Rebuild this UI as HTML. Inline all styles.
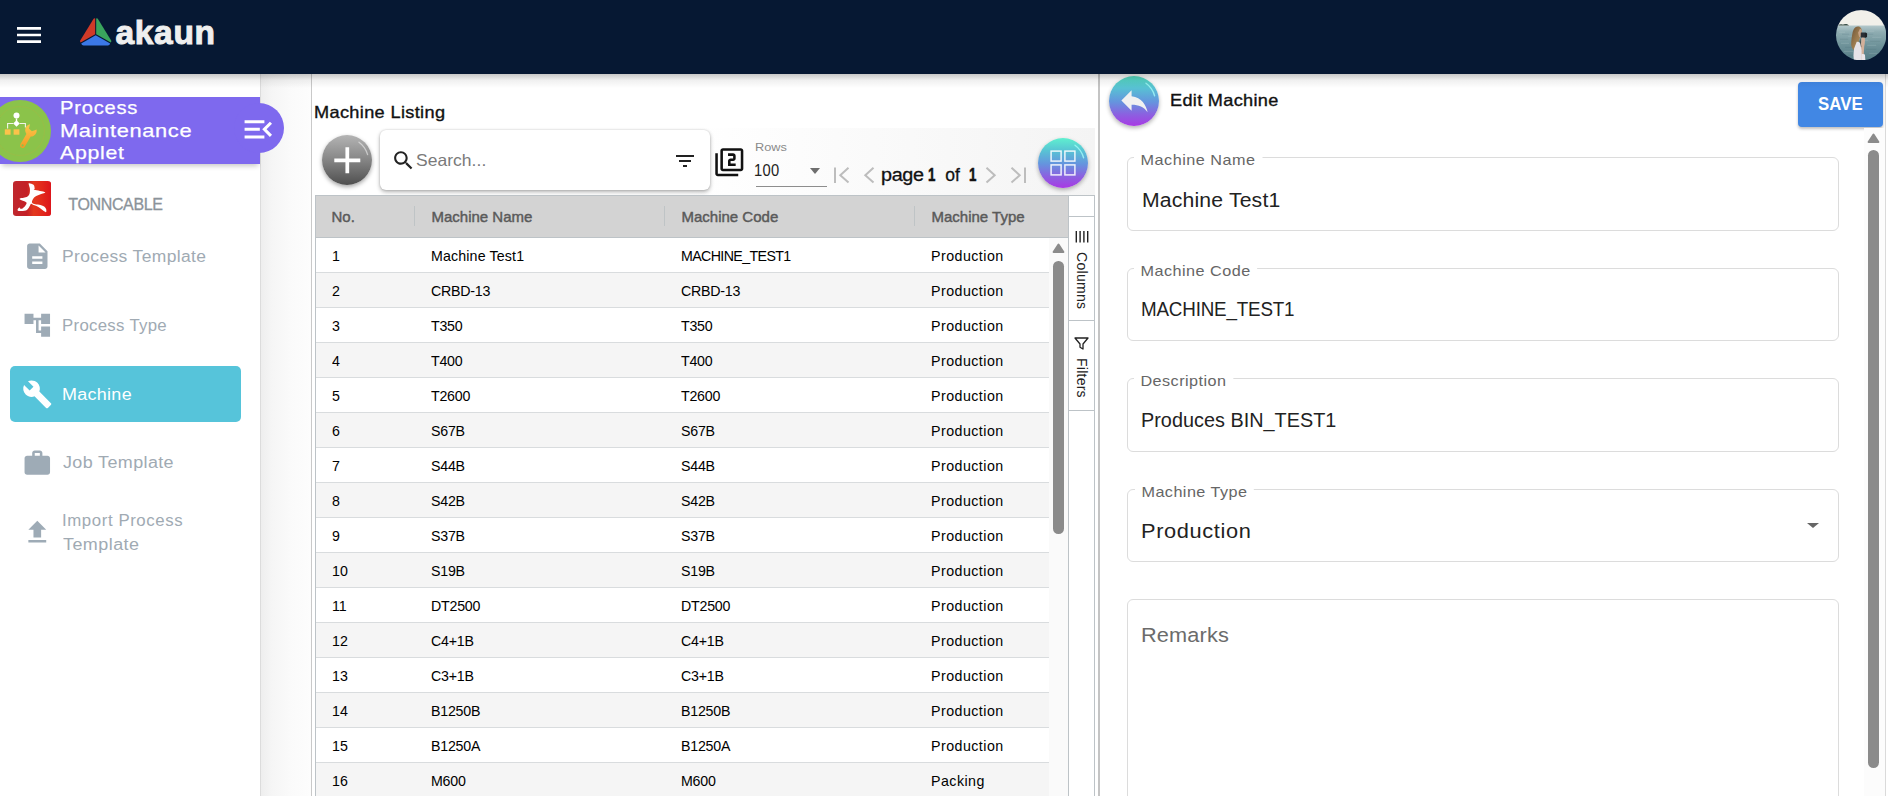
<!DOCTYPE html>
<html lang="en">
<head>
<meta charset="utf-8">
<title>Process Maintenance Applet - Machine</title>
<style>
*{box-sizing:border-box;margin:0;padding:0}
html,body{width:1888px;height:796px;overflow:hidden;background:#fff}
body{font-family:"Liberation Sans",sans-serif;color:#222;position:relative}
.abs{position:absolute}
.t{position:absolute;white-space:nowrap;line-height:1}
/* header */
#hdr{position:absolute;left:0;top:0;width:1888px;height:74px;background:#061833;z-index:20}
#hdr-shadow{position:absolute;left:0;top:74px;width:1888px;height:14px;background:linear-gradient(to bottom,rgba(0,0,0,.22),rgba(0,0,0,.06) 45%,rgba(0,0,0,0));z-index:19}
/* sidebar */
#side{position:absolute;left:0;top:74px;width:261px;height:722px;background:#fff;border-right:1px solid #dcdcdc}
#gap{position:absolute;left:261px;top:74px;width:51px;height:722px;background:linear-gradient(to right,#eeeeee 0,#f5f5f5 10px,#fafafa 28px,#fdfdfd 100%)}
#gapline{position:absolute;left:311px;top:74px;width:1px;height:722px;background:#c9c9c9}
.nav{position:absolute;left:10px;width:231px;height:56px;border-radius:5px}
.nav .lbl{position:absolute;white-space:nowrap;font-size:16px;color:#a0aab3;line-height:20px;transform:scaleX(1.05);transform-origin:0 50%}
.nav svg{position:absolute;left:12px;top:13px;width:30.6px;height:30.6px;fill:#9eabb6}
.nav.on{background:#56c4da}
.nav.on .lbl{color:#fff}
.nav.on svg{fill:#fff}

/* list panel */
#list{position:absolute;left:312px;top:74px;width:787px;height:722px;background:#fff}
#tb{position:absolute;left:3px;top:54px;width:780px;height:68px;background:linear-gradient(to right,#fff 0,#fff 48%,#f4f4f4 100%)}
#grid{position:absolute;left:3px;top:121px;width:754px;height:601px;border-left:1px solid #bdc3c7;border-top:1px solid #bdc3c7;font-size:14.200px;color:#000}
#gh{position:absolute;left:0;top:0;width:753px;height:42px;background:#d3d3d3;border-bottom:1px solid #bdc3c7}
#gh span{position:absolute;top:13px;font-size:15px;font-weight:400;color:#5a5a5a;-webkit-text-stroke:.45px #5a5a5a;line-height:16px;white-space:nowrap}
#gh i{position:absolute;top:10px;width:1px;height:20px;background:#bfc4c6}
.r{position:absolute;left:0;width:732.8px;height:35px;border-bottom:1px solid #d9dcde;background:#fff}
.r.o{background:#f5f5f5}
.r span{position:absolute;top:9.500px;line-height:16px;white-space:nowrap;font-size:15px;transform:scaleX(.947);transform-origin:0 50%}
.r .c0{left:15.5px}.r .c1{left:114.8px;letter-spacing:-.25px}.r .c2{left:364.8px;letter-spacing:-.25px}.r .c3{left:614.5px;letter-spacing:.5px}

/* edit panel */
#edit{position:absolute;left:1100px;top:74px;width:788px;height:722px;background:#fff}
.fld{position:absolute;left:27px;width:712px;height:73.500px;border:1px solid #dcdcdc;border-radius:6px}
.fld .lb{position:absolute;padding:0 6px;background:#fff;font-size:15px;line-height:16px;color:#666;white-space:nowrap;transform:scaleX(1.04);transform-origin:0 50%}
.fld .vl{position:absolute;font-size:20px;line-height:22px;color:#222;white-space:nowrap;transform:scaleX(1.03);transform-origin:0 50%}
.apt{font-size:19px;color:#fff;z-index:5;-webkit-text-stroke:.25px #fff;transform:scaleX(1.06);transform-origin:0 50%}
</style>
</head>
<body>

<!-- ===== top header ===== -->
<div id="hdr">
  <svg class="abs" style="left:12.5px;top:19px;width:32px;height:32px" viewBox="0 0 24 24"><path fill="#fff" d="M3 18h18v-2H3v2zm0-5h18v-2H3v2zm0-7v2h18V6H3z"/></svg>
  <svg class="abs" style="left:79px;top:17px;width:34px;height:30px" viewBox="0 0 34 30">
    <path d="M16.2 1.6 L16.2 17.2 L1.6 25.6 Q0.6 24.6 1.4 23.2 L14.6 1.8 Q15.4 0.8 16.2 1.6Z" fill="#d03a28"/>
    <path d="M17.2 1.6 L17.2 17.2 L31.8 25.6 Q32.8 24.6 32 23.2 L18.8 1.8 Q18 0.8 17.2 1.6Z" fill="#3aa55d"/>
    <path d="M16.7 18.2 L2.2 26.6 Q2.8 28.4 4.6 28.6 L28.8 28.6 Q30.6 28.4 31.2 26.6Z" fill="#3b78e7"/>
  </svg>
  <div class="t" id="brand" style="left:115.5px;top:15.7px;font-size:33.5px;font-weight:700;color:#efefef;letter-spacing:0.68px;-webkit-text-stroke:1px #efefef">akaun</div>
  <svg class="abs" id="avatar" style="left:1835.800px;top:9.600px;width:50.300px;height:50.500px" viewBox="0 0 50 50">
    <defs>
      <clipPath id="avc"><circle cx="25" cy="25" r="25"/></clipPath>
      <linearGradient id="sea" x1="0" y1="0" x2="0" y2="1"><stop offset="0" stop-color="#b4c9cc"/><stop offset=".18" stop-color="#8fadb2"/><stop offset=".55" stop-color="#6f939a"/><stop offset="1" stop-color="#557c86"/></linearGradient>
      <linearGradient id="hair" x1="0" y1="0" x2="1" y2="1"><stop offset="0" stop-color="#6b5236"/><stop offset=".5" stop-color="#9a7a4e"/><stop offset="1" stop-color="#b99a6a"/></linearGradient>
    </defs>
    <g clip-path="url(#avc)">
      <rect x="0" y="0" width="50" height="16" fill="#f1f0ea"/>
      <rect x="0" y="15.300" width="50" height="35" fill="url(#sea)"/>
      <path d="M2 15.400c1.200-1.200 2.800-1.600 4-1.200 1.200.3 1.800.2 3-.3 1.500-.500 3 .2 4 1.500z" fill="#3d524c"/>
      <g stroke="#dfe9ea" stroke-opacity=".35" stroke-width=".5" fill="none"><path d="M3 22h6M12 26h7M30 21h8M36 27h9M5 33h8M31 35h9M8 41h9M33 43h8M27 30h5"/></g>
      <g stroke="#3f636d" stroke-opacity=".35" stroke-width=".5" fill="none"><path d="M6 24h7M28 24h9M4 29h8M34 31h10M9 37h8M30 39h10M12 45h8"/></g>
      <path d="M21.500 16.300c-2.600.3-4.300 2.500-4.900 5.500-.8 4-1.600 8.500-1.500 12.500.1 2.500 1.200 4.500 2.600 5.500l3.500-4 2.500-8 1.800-6.500c.4-2.500-.9-5.300-4-5z" fill="url(#hair)"/>
      <path d="M23.800 18.500c1.400.3 2 1.600 1.900 3.200l-.3 3.800-2.400 1.500-1-4.500z" fill="#c7a387"/>
      <path d="M25 22.200h4.300c.6 0 1 .4 1 1v3.300c0 .6-.4 1-1 1H25.600c-.6 0-1-.4-1-1v-3.300c0-.6.100-1 .4-1z" fill="#2a3036"/>
      <rect x="28.600" y="22.800" width="2.300" height="4.200" rx=".8" fill="#1f2429"/>
      <path d="M25.400 27.300l3.200.2c.4 3 .1 6-.6 9l-.7 13.500h-3.600l1-14z" fill="#d3b09a"/>
      <path d="M24.200 27.600l.9 8.400-.4 2.500-1.200-7z" fill="#39423f"/>
      <path d="M20.600 31.500c1.600-.5 3 .3 3.600 2l1.200 6.500.2 10h-7.800c-.6-4-.5-8 .3-12z" fill="#e6e3e8"/>
      <path d="M25.400 44c1.500-.5 3-.3 3.400.5l.4 5.500h-3.600z" fill="#ebe6ea"/>
    </g>
  </svg>
</div>
<div id="hdr-shadow"></div>

<!-- ===== sidebar ===== -->
<div id="side">
  <!-- applet title band -->
  <div class="abs" style="left:0;top:23px;width:260px;height:67px;background:#7e69ee;box-shadow:0 4px 5px -2px rgba(0,0,0,.22)"></div>
  <div class="abs" style="left:234px;top:29px;width:50px;height:50px;border-radius:50%;background:#7e69ee;z-index:3"></div>
  <svg class="abs" style="left:240px;top:37px;width:36.6px;height:36.6px;z-index:4" viewBox="0 0 24 24"><path fill="#fff" d="M3 18h13v-2H3v2zm0-5h10v-2H3v2zm0-7v2h13V6H3zm18 9.59L17.42 12 21 8.41 19.590 7l-5 5 5 5L21 15.590z"/></svg>
  <div class="abs" style="left:-11px;top:25.5px;width:62px;height:62px;border-radius:50%;background:#8bc34a"></div>
  <div class="abs" style="left:-5px;top:31.500px;width:50px;height:50px;border-radius:50%;border:1px solid rgba(160,185,70,.6)"></div>
  <svg class="abs" style="left:2px;top:35.200px;width:38px;height:42px" viewBox="0 0 38 42"><defs><linearGradient id="wg" x1="0" y1="0" x2="0" y2="1"><stop offset="0" stop-color="#f9c74a"/><stop offset="1" stop-color="#f59a23"/></linearGradient></defs>
    <circle cx="14.5" cy="6.500" r="3" fill="#fff"/>
    <path d="M14.500 9.500v3" stroke="#fff" stroke-width="1.4"/>
    <path d="M14.500 11.200l3.300 3.300-3.300 3.300-3.300-3.300z" fill="#fff"/>
    <path d="M11.200 14.500H5.600v5M17.800 14.500h5.600v4" stroke="#f1f5e6" stroke-width="1.100" fill="none"/>
    <rect x="2.800" y="20.300" width="5.800" height="5.400" fill="#fbc34a"/>
    <rect x="11.600" y="20.300" width="5.800" height="5.400" fill="#fbc34a"/>
    <path d="M34.600 20.400c.5 2.600-.7 5.300-3.200 6.500-.9.400-1.800.6-2.700.5l-6 10.300c-.7 1.200-2.200 1.600-3.400.9s-1.600-2.200-.9-3.400l6-10.300c-1.600-2.100-1.700-5.100-.100-7.300 1-1.300 2.400-2.100 3.800-2.300l-1.200 4.300 3 2.700 3.500-1.400z" fill="url(#wg)"/>
    <circle cx="20.600" cy="36.400" r="1.100" fill="#8bc34a"/>
  </svg>
  <div class="t apt" id="a1" style="left:59.9px;top:23.9px;letter-spacing:0.73px">Process</div>
  <div class="t apt" id="a2" style="left:59.9px;top:46.7px;letter-spacing:0.56px;transform:scaleX(1.15);transform-origin:0 50%">Maintenance</div>
  <div class="t apt" id="a3" style="left:60.1px;top:69.3px;letter-spacing:0.64px;transform:scaleX(1.12);transform-origin:0 50%">Applet</div>

  <!-- tenant -->
  <svg class="abs" style="left:12.900px;top:106.900px;width:38.200px;height:35px" viewBox="0 0 38.200 35">
    <defs><linearGradient id="tg" x1="0" x2="1" y1="0" y2="0"><stop offset="0" stop-color="#bf282e"/><stop offset=".36" stop-color="#c41f26"/><stop offset=".54" stop-color="#e2391e"/><stop offset=".75" stop-color="#e22a1c"/><stop offset="1" stop-color="#dc151b"/></linearGradient></defs>
    <rect x="0" y="0" width="38.200" height="35" rx="3.200" fill="url(#tg)"/>
    <path d="M15.90 2.30C16.62 2.12 19.53 2.93 20.50 3.80C21.47 4.67 21.55 6.68 21.70 7.50C21.85 8.32 19.67 8.08 21.40 8.70C23.13 9.32 31.08 10.43 32.10 11.20C33.12 11.97 29.05 12.62 27.50 13.30C25.95 13.98 24.07 14.48 22.80 15.30C21.53 16.12 20.52 17.13 19.90 18.20C19.28 19.27 18.70 20.85 19.10 21.70C19.50 22.55 20.90 22.93 22.30 23.30C23.70 23.67 26.02 23.55 27.50 23.90C28.98 24.25 30.27 24.72 31.20 25.40C32.13 26.08 32.77 27.07 33.10 28.00C33.43 28.93 33.52 30.62 33.20 31.00C32.88 31.38 32.15 30.88 31.20 30.30C30.25 29.72 28.70 28.33 27.50 27.50C26.30 26.67 25.17 25.87 24.00 25.30C22.83 24.73 21.47 24.52 20.50 24.10C19.53 23.68 18.82 22.63 18.20 22.80C17.58 22.97 17.38 24.18 16.80 25.10C16.22 26.02 15.53 27.52 14.70 28.30C13.87 29.08 13.33 29.53 11.80 29.80C10.27 30.07 6.70 30.10 5.50 29.90C4.30 29.70 4.45 29.15 4.60 28.60C4.75 28.05 5.92 26.75 6.40 26.60C6.88 26.45 6.98 27.55 7.50 27.70C8.02 27.85 8.73 27.93 9.50 27.50C10.27 27.07 11.42 25.97 12.10 25.10C12.78 24.23 13.55 23.02 13.60 22.30C13.65 21.58 13.42 21.38 12.40 20.80C11.38 20.22 8.42 19.35 7.50 18.80C6.58 18.25 6.37 17.83 6.90 17.50C7.43 17.17 9.43 17.12 10.70 16.80C11.97 16.48 13.52 16.33 14.50 15.60C15.48 14.87 16.20 13.70 16.60 12.40C17.00 11.10 16.97 9.05 16.90 7.80C16.83 6.55 16.37 5.82 16.20 4.90C16.03 3.98 15.18 2.48 15.90 2.30Z" fill="#fff"/>
  </svg>
  <div class="t" id="tenant" style="left:68.3px;top:123.2px;font-size:16px;color:#8b939a;letter-spacing:-0.36px;-webkit-text-stroke:.3px #8b939a">TONNCABLE</div>

  <!-- nav items -->
  <div class="nav" style="top:154px"><svg viewBox="0 0 24 24"><path d="M14 2H6c-1.100 0-1.990.9-1.990 2L4 20c0 1.100.89 2 1.990 2H18c1.100 0 2-.9 2-2V8l-6-6zm2 16H8v-2h8v2zm0-4H8v-2h8v2zm-3-5V3.500L18.500 9H13z"/></svg><span class="lbl" id="n1" style="left:52.0px;top:18.5px;letter-spacing:0.35px;transform:scaleX(1.09);transform-origin:0 50%">Process Template</span></div>
  <div class="nav" style="top:223px"><svg viewBox="0 0 24 24"><path d="M22 11V3h-7v3H9V3H2v8h7V8h2v10h4v3h7v-8h-7v3h-2V8h2v3z"/></svg><span class="lbl" id="n2" style="left:52.0px;top:19.4px;letter-spacing:0.28px">Process Type</span></div>
  <div class="nav on" style="top:292px"><svg viewBox="0 0 24 24"><path d="M22.700 19l-9.100-9.100c.9-2.300.4-5-1.500-6.900-2-2-5-2.400-7.400-1.300L9 6 6 9 1.600 4.700C.4 7.100.9 10.100 2.900 12.100c1.900 1.900 4.600 2.400 6.900 1.500l9.100 9.100c.4.4 1 .4 1.400 0l2.300-2.300c.5-.4.500-1.100.1-1.400z"/></svg><span class="lbl" id="n3" style="left:52.0px;top:19.4px;letter-spacing:0.28px;transform:scaleX(1.12);transform-origin:0 50%">Machine</span></div>
  <div class="nav" style="top:361px"><svg viewBox="0 0 24 24"><path d="M20 6h-4V4c0-1.110-.89-2-2-2h-4c-1.110 0-2 .89-2 2v2H4c-1.110 0-1.990.89-1.990 2L2 19c0 1.110.89 2 2 2h16c1.110 0 2-.89 2-2V8c0-1.110-.89-2-2-2zm-6 0h-4V4h4v2z"/></svg><span class="lbl" id="n4" style="left:52.9px;top:17.9px;letter-spacing:0.35px;transform:scaleX(1.12);transform-origin:0 50%">Job Template</span></div>
  <div class="nav" style="top:430px"><svg viewBox="0 0 24 24"><path d="M5 20h14v-2H5v2zm0-10h4v6h6v-6h4l-7-7-7 7z"/></svg><span class="lbl" id="n5a" style="left:52.0px;top:6.5px;letter-spacing:0.56px">Import Process</span><span class="lbl" id="n5b" style="left:52.9px;top:31.2px;letter-spacing:0.42px;transform:scaleX(1.12);transform-origin:0 50%">Template</span></div>
</div>
<div id="gap"></div>
<div id="gapline"></div>


<!-- ===== machine listing ===== -->
<div id="list">
  <div class="t" id="ml" style="left:1.8px;top:29.9px;font-size:16.500px;color:#111;letter-spacing:0.32px;transform:scaleX(1.1);transform-origin:0 50%;-webkit-text-stroke:.35px #111">Machine Listing</div>
  <div id="tb"></div>
  <div class="abs" id="addbtn" style="left:10px;top:61px;width:50px;height:50px;border-radius:50%;background:linear-gradient(to bottom,#b4b4b4,#8a8a8a 45%,#4f4f4f);box-shadow:0 2px 4px rgba(0,0,0,.35)">
    <svg class="abs" style="left:2.700px;top:2.700px;width:44.600px;height:44.600px" viewBox="0 0 24 24"><path fill="#fff" d="M19 13h-6v6h-2v-6H5v-2h6V5h2v6h6v2z"/></svg>
    <svg class="abs" style="left:0;top:0;width:50px;height:50px" viewBox="0 0 50 50"><path d="M37 7.2a22.5 22.5 0 0 1 8.6 12.5" fill="none" stroke="rgba(255,255,255,.5)" stroke-width="1.3" stroke-linecap="round"/></svg>
  </div>
  <div class="abs" id="search" style="left:68px;top:56px;width:330px;height:60px;background:#fff;border-radius:6px;box-shadow:0 2px 4px rgba(0,0,0,.3),0 0 2px rgba(0,0,0,.18)">
    <svg class="abs" style="left:10.500px;top:17.500px;width:25px;height:25px" viewBox="0 0 24 24"><path fill="#222" d="M15.500 14h-.79l-.28-.27C15.410 12.590 16 11.110 16 9.500 16 5.910 13.090 3 9.500 3S3 5.910 3 9.500 5.910 16 9.500 16c1.610 0 3.090-.59 4.230-1.570l.27.28v.79l5 4.990L20.490 19l-4.990-5zm-6 0C7.010 14 5 11.990 5 9.500S7.010 5 9.500 5 14 7.010 14 9.500 11.990 14 9.500 14z"/></svg>
    <div class="t" id="sph" style="left:36.4px;top:21.9px;font-size:16.500px;color:#7a7a7a;letter-spacing:0.03px;transform:scaleX(1.06);transform-origin:0 50%">Search...</div>
    <svg class="abs" style="left:292.500px;top:19px;width:24px;height:24px" viewBox="0 0 24 24"><path fill="#222" d="M10 18h4v-2h-4v2zM3 6v2h18V6H3zm3 7h12v-2H6v2z"/></svg>
  </div>
  <svg class="abs" style="left:402.300px;top:72.600px;width:30.600px;height:30.600px" viewBox="0 0 24 24"><path fill="#111" d="M3 5H1v16c0 1.100.9 2 2 2h16v-2H3V5zm18-4H7c-1.100 0-2 .9-2 2v14c0 1.100.9 2 2 2h14c1.100 0 2-.9 2-2V3c0-1.100-.9-2-2-2zm0 16H7V3h14v14zm-4-4h-4v-2h2c1.100 0 2-.89 2-2V7c0-1.110-.9-2-2-2h-4v2h4v2h-2c-1.100 0-2 .89-2 2v4h6v-2z"/></svg>
  <div class="t" id="rowsl" style="left:442.8px;top:67.9px;font-size:11.800px;color:#8a8a8a;letter-spacing:0.02px;transform:scaleX(1.08);transform-origin:0 50%">Rows</div>
  <div class="t" id="rowsv" style="left:442.2px;top:88.8px;font-size:16px;color:#222;letter-spacing:0.32px;transform:scaleX(0.92);transform-origin:0 50%">100</div>
  <div class="abs" style="left:498.2px;top:94.1px;width:0;height:0;border-left:5.9px solid transparent;border-right:5.9px solid transparent;border-top:6px solid #6e6e6e"></div>
  <div class="abs" style="left:443.500px;top:112px;width:71px;height:1px;background:#8d8d8d"></div>
  <!-- pager -->
  <svg class="abs" style="left:519px;top:90px;width:22px;height:22px" viewBox="0 0 22 22"><path d="M4 3.500v15.500M17.500 3.800l-8.200 7.400 8.200 7.400" fill="none" stroke="#bdbdbd" stroke-width="2"/></svg>
  <svg class="abs" style="left:549px;top:90px;width:16px;height:22px" viewBox="0 0 16 22"><path d="M12.500 3.800l-8.200 7.400 8.200 7.400" fill="none" stroke="#bdbdbd" stroke-width="2"/></svg>
  <div class="t" id="pg1" style="left:569.4px;top:92.9px;font-size:17.500px;color:#111;letter-spacing:-0.33px;transform:scaleX(1.13);transform-origin:0 50%;-webkit-text-stroke:.3px #111">page</div>
  <div class="t" id="pg2" style="left:616.1px;top:91.8px;font-size:18.500px;color:#111;font-weight:700;transform:scaleX(.72);transform-origin:0 50%;-webkit-text-stroke:.5px #111">1</div>
  <div class="t" id="pg3" style="left:633.2px;top:92.9px;font-size:17.500px;color:#111;letter-spacing:0.06px;-webkit-text-stroke:.3px #111">of</div>
  <div class="t" id="pg4" style="left:656.5px;top:91.8px;font-size:18.500px;color:#111;font-weight:700;transform:scaleX(.72);transform-origin:0 50%;-webkit-text-stroke:.5px #111">1</div>
  <svg class="abs" style="left:671px;top:90px;width:16px;height:22px" viewBox="0 0 16 22"><path d="M3.500 3.800l8.200 7.400-8.200 7.400" fill="none" stroke="#bdbdbd" stroke-width="2"/></svg>
  <svg class="abs" style="left:695px;top:90px;width:22px;height:22px" viewBox="0 0 22 22"><path d="M18 3.500v15.500M4.500 3.800l8.200 7.400-8.200 7.400" fill="none" stroke="#bdbdbd" stroke-width="2"/></svg>
  <div class="abs" id="viewbtn" style="left:726px;top:64px;width:50px;height:50px;border-radius:50%;background:linear-gradient(to bottom,#5ff0cf 0,#58c4d4 25%,#6594de 52%,#8a62e0 76%,#a83ae4 100%);box-shadow:0 2px 4px rgba(0,0,0,.3)">
    <svg class="abs" style="left:0;top:0;width:50px;height:50px" viewBox="0 0 50 50"><g fill="none" stroke="rgba(255,255,255,.88)" stroke-width="1.5"><rect x="13.1" y="13.1" width="10" height="10"/><rect x="26.9" y="13.1" width="10" height="10"/><rect x="13.1" y="26.9" width="10" height="10"/><rect x="26.9" y="26.9" width="10" height="10"/></g></svg>
    <svg class="abs" style="left:0;top:0;width:50px;height:50px" viewBox="0 0 50 50"><path d="M37 7.2a22.5 22.5 0 0 1 8.6 12.5" fill="none" stroke="rgba(170,255,250,.75)" stroke-width="1.4" stroke-linecap="round"/></svg>
  </div>

  <div id="grid">
    <div id="gh"><span style="left:15.500px">No.</span><i style="left:98px"></i><span style="left:115.500px">Machine Name</span><i style="left:348.2px"></i><span style="left:365.500px">Machine Code</span><i style="left:598.2px"></i><span style="left:615.500px">Machine Type</span></div>
    <div class="r" style="top:42px"><span class="c0">1</span><span class="c1" style="letter-spacing:.15px">Machine Test1</span><span class="c2" style="letter-spacing:-.65px">MACHINE_TEST1</span><span class="c3">Production</span></div>
    <div class="r o" style="top:77px"><span class="c0">2</span><span class="c1">CRBD-13</span><span class="c2">CRBD-13</span><span class="c3">Production</span></div>
    <div class="r" style="top:112px"><span class="c0">3</span><span class="c1">T350</span><span class="c2">T350</span><span class="c3">Production</span></div>
    <div class="r o" style="top:147px"><span class="c0">4</span><span class="c1">T400</span><span class="c2">T400</span><span class="c3">Production</span></div>
    <div class="r" style="top:182px"><span class="c0">5</span><span class="c1">T2600</span><span class="c2">T2600</span><span class="c3">Production</span></div>
    <div class="r o" style="top:217px"><span class="c0">6</span><span class="c1">S67B</span><span class="c2">S67B</span><span class="c3">Production</span></div>
    <div class="r" style="top:252px"><span class="c0">7</span><span class="c1">S44B</span><span class="c2">S44B</span><span class="c3">Production</span></div>
    <div class="r o" style="top:287px"><span class="c0">8</span><span class="c1">S42B</span><span class="c2">S42B</span><span class="c3">Production</span></div>
    <div class="r" style="top:322px"><span class="c0">9</span><span class="c1">S37B</span><span class="c2">S37B</span><span class="c3">Production</span></div>
    <div class="r o" style="top:357px"><span class="c0">10</span><span class="c1">S19B</span><span class="c2">S19B</span><span class="c3">Production</span></div>
    <div class="r" style="top:392px"><span class="c0">11</span><span class="c1">DT2500</span><span class="c2">DT2500</span><span class="c3">Production</span></div>
    <div class="r o" style="top:427px"><span class="c0">12</span><span class="c1">C4+1B</span><span class="c2">C4+1B</span><span class="c3">Production</span></div>
    <div class="r" style="top:462px"><span class="c0">13</span><span class="c1">C3+1B</span><span class="c2">C3+1B</span><span class="c3">Production</span></div>
    <div class="r o" style="top:497px"><span class="c0">14</span><span class="c1">B1250B</span><span class="c2">B1250B</span><span class="c3">Production</span></div>
    <div class="r" style="top:532px"><span class="c0">15</span><span class="c1">B1250A</span><span class="c2">B1250A</span><span class="c3">Production</span></div>
    <div class="r o" style="top:567px"><span class="c0">16</span><span class="c1">M600</span><span class="c2">M600</span><span class="c3">Packing</span></div>
    <!-- grid vertical scrollbar -->
    <div class="abs" style="left:732.8px;top:42px;width:20.2px;height:560px;background:#fafafa"></div>
    <svg class="abs" style="left:734.6px;top:46.3px;width:15px;height:13px" viewBox="0 0 15 13"><path d="M7.5 2.6l4.9 7.4H2.600z" fill="#8b8b8b" stroke="#8b8b8b" stroke-width="2" stroke-linejoin="round"/></svg>
    <div class="abs" style="left:737.2px;top:65px;width:10.6px;height:273px;border-radius:5.3px;background:#8b8b8b"></div>
  </div>
  <!-- ag-grid side bar -->
  <div class="abs" id="sb" style="left:756px;top:121px;width:27px;height:601px;border:1px solid #bdc3c7;border-bottom:0;background:#fff">
    <div class="abs" style="left:0;top:19.6px;width:25px;height:1px;background:#bdc3c7"></div>
    <div class="abs" style="left:0;top:124px;width:25px;height:1px;background:#bdc3c7"></div>
    <div class="abs" style="left:0;top:213.500px;width:25px;height:1px;background:#bdc3c7"></div>
    <svg class="abs" style="left:5.8px;top:35.3px;width:14px;height:11.5px" viewBox="0 0 14 11.5"><path d="M1.3 0v11.5M5.1 0v11.5M8.9 0v11.5M12.7 0v11.5" stroke="#222" stroke-width="1.4"/></svg>
    <div class="t" id="colsT" style="left:5px;top:55.6px;font-size:14px;color:#222;writing-mode:vertical-rl;letter-spacing:.3px;line-height:16px">Columns</div>
    <svg class="abs" style="left:5.4px;top:141px;width:15px;height:13px" viewBox="0 0 15 13"><path d="M1 1h13L9 7V12L6 10.2V7z" fill="none" stroke="#222" stroke-width="1.3" stroke-linejoin="round"/></svg>
    <div class="t" id="filtT" style="left:5px;top:161.8px;font-size:14px;color:#222;writing-mode:vertical-rl;letter-spacing:.25px;line-height:16px">Filters</div>
  </div>
</div>
<div class="abs" style="left:1098px;top:74px;width:2px;height:722px;background:#c4c4c4"></div>


<!-- ===== edit machine ===== -->
<div id="edit">
  <div class="abs" id="backbtn" style="left:9px;top:2px;width:50px;height:50px;border-radius:50%;background:linear-gradient(to bottom,#55dcc0 0,#58c0d4 25%,#6594de 52%,#8a62e0 76%,#a83ae4 100%);box-shadow:0 2px 4px rgba(0,0,0,.3)">
    <svg class="abs" style="left:7.500px;top:7px;width:35px;height:35px" viewBox="0 0 24 24"><path fill="#f1f1f1" d="M10 9V5l-7 7 7 7v-4.100c5 0 8.500 1.600 11 5.100-1-5-4-10-11-11z"/></svg>
    <svg class="abs" style="left:0;top:0;width:50px;height:50px" viewBox="0 0 50 50"><path d="M37 7.2a22.5 22.5 0 0 1 8.6 12.5" fill="none" stroke="rgba(170,255,250,.75)" stroke-width="1.4" stroke-linecap="round"/></svg>
  </div>
  <div class="t" id="edT" style="left:70.4px;top:17.7px;font-size:16.500px;color:#111;letter-spacing:0.28px;transform:scaleX(1.1);transform-origin:0 50%;-webkit-text-stroke:.35px #111">Edit Machine</div>
  <div class="abs" id="save" style="left:698px;top:8px;width:85px;height:45px;border-radius:4px;background:#4187e4;box-shadow:0 2px 3px rgba(0,0,0,.25)"><div class="t" id="saveT" style="left:19.7px;top:14.4px;font-size:17.500px;font-weight:700;color:#fff;letter-spacing:0.08px;transform:scaleX(0.96);transform-origin:0 50%">SAVE</div></div>

  <div class="fld" style="top:83px"><span class="lb" id="lb1" style="left:6.3px;top:-5.8px;letter-spacing:0.48px;transform:scaleX(1.08);transform-origin:0 50%">Machine Name</span><span class="vl" id="vl1" style="left:13.6px;top:30.6px;letter-spacing:0.15px;transform:scaleX(1.06);transform-origin:0 50%">Machine Test1</span></div>
  <div class="fld" style="top:193.500px"><span class="lb" id="lb2" style="left:6.0px;top:-5.8px;letter-spacing:0.45px;transform:scaleX(1.08);transform-origin:0 50%">Machine Code</span><span class="vl" id="vl2" style="left:13.2px;top:29.6px;letter-spacing:-0.19px;transform:scaleX(0.94);transform-origin:0 50%">MACHINE_TEST1</span></div>
  <div class="fld" style="top:304px"><span class="lb" id="lb3" style="left:6.0px;top:-5.8px;letter-spacing:0.41px;transform:scaleX(1.08);transform-origin:0 50%">Description</span><span class="vl" id="vl3" style="left:13.2px;top:30.4px;letter-spacing:0.03px;transform:scaleX(0.99);transform-origin:0 50%">Produces BIN_TEST1</span></div>
  <div class="fld" style="top:414.500px"><span class="lb" id="lb4" style="left:6.6px;top:-5.8px;letter-spacing:0.41px;transform:scaleX(1.08);transform-origin:0 50%">Machine Type</span><span class="vl" id="vl4" style="left:13.0px;top:30.0px;letter-spacing:0.57px;transform:scaleX(1.09);transform-origin:0 50%">Production</span>
    <div class="abs" style="left:679px;top:33.500px;width:0;height:0;border-left:6px solid transparent;border-right:6px solid transparent;border-top:5.500px solid #666"></div>
  </div>
  <div class="fld" style="top:525px;height:220px;border-radius:6px 6px 0 0"><span class="vl" id="rem" style="left:13.0px;top:23.8px;letter-spacing:0.13px;color:#6b6b6b;font-size:20.5px;transform:scaleX(1.06);transform-origin:0 50%">Remarks</span></div>

  <!-- panel scrollbar -->
  <div class="abs" style="left:764px;top:54px;width:21px;height:668px;background:#fcfcfc"></div>
  <svg class="abs" style="left:765.5px;top:57.5px;width:15px;height:13px" viewBox="0 0 15 13"><path d="M7.5 2.6l4.900 7.400H2.600z" fill="#8b8b8b" stroke="#8b8b8b" stroke-width="2" stroke-linejoin="round"/></svg>
  <div class="abs" style="left:768px;top:76px;width:11px;height:618px;border-radius:5.5px;background:#8b8b8b"></div>
  <div class="abs" style="left:785px;top:0;width:1px;height:722px;background:#dadada"></div>
</div>

</body>
</html>
